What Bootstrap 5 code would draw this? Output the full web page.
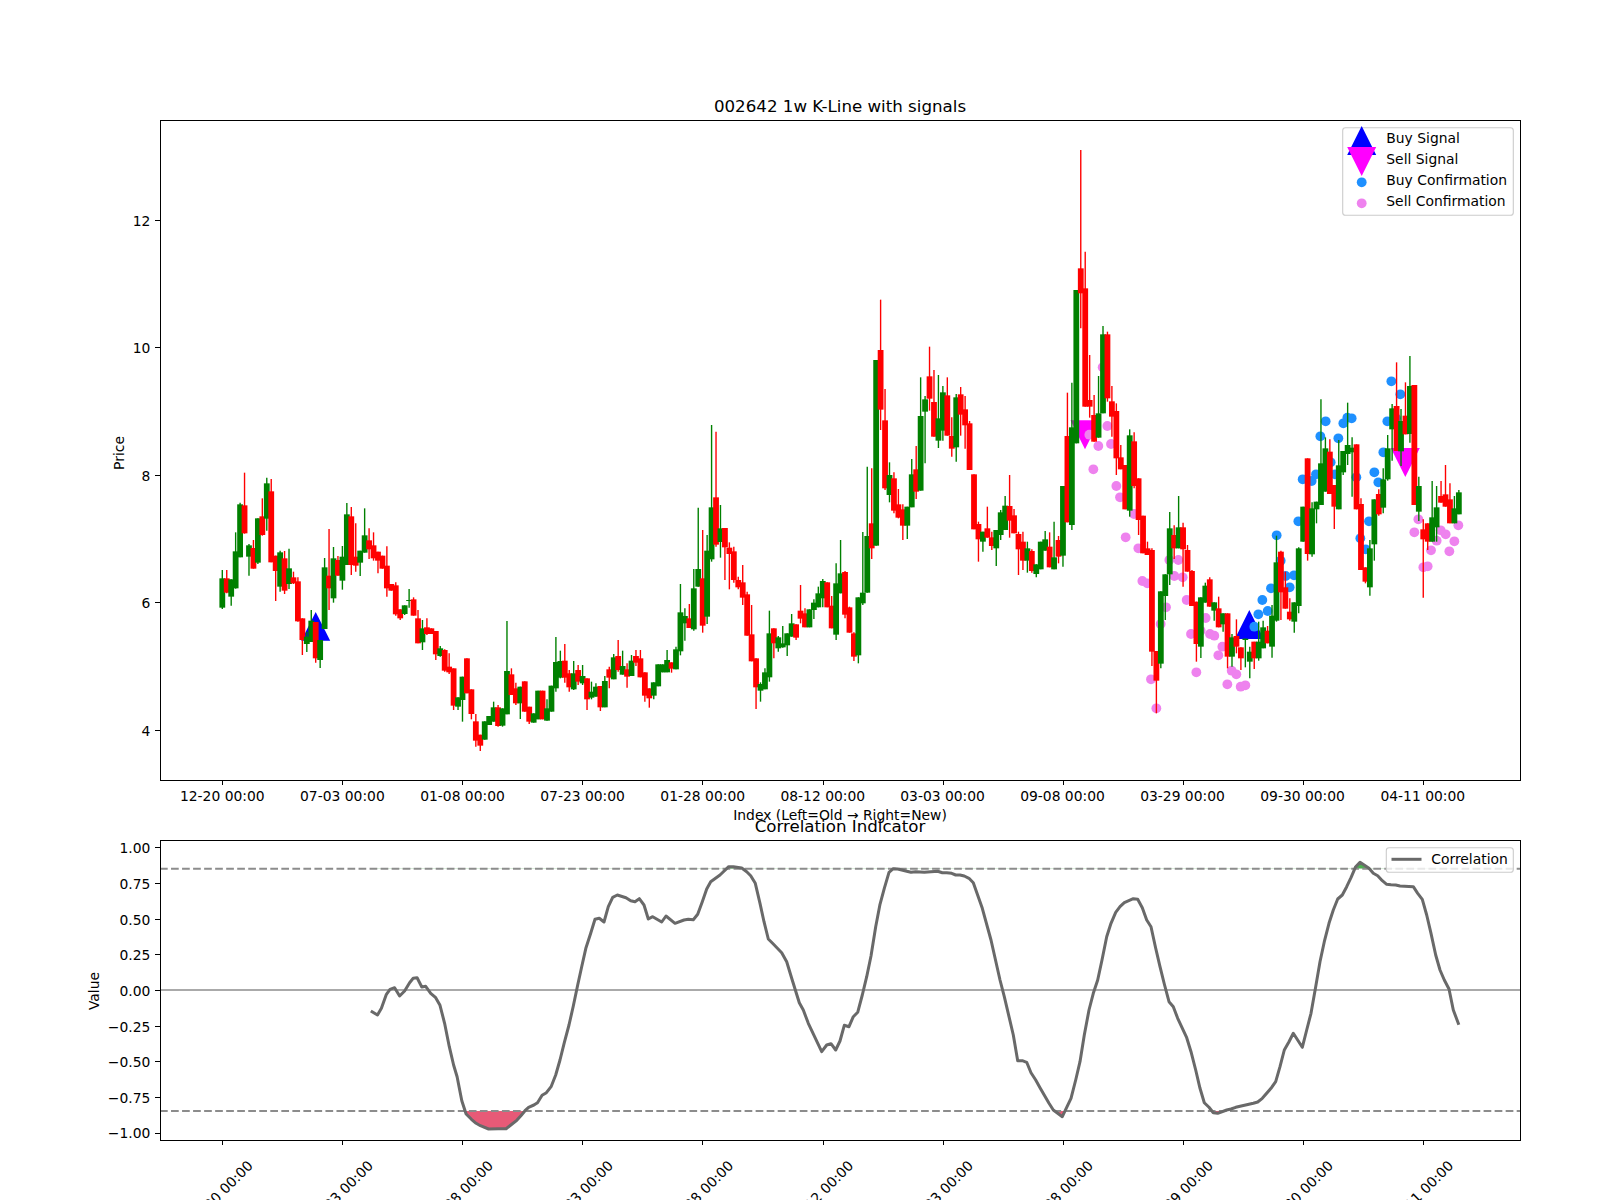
<!DOCTYPE html>
<html lang="en">

<head>
    <meta charset="UTF-8" />
    <meta name="viewport" content="width=device-width, initial-scale=1.0" />
    <title>002642 1w K-Line with signals</title>
    <link href="https://cdn.jsdelivr.net/npm/bootstrap@5.3.0/dist/css/bootstrap.min.css" rel="stylesheet" />
    <style>
        html, body {
            background-color: #fff;
            overflow: hidden;
        }

        .plot-figure {
            display: block;
            width: 1600px;
            height: 1200px;
        }

        .plot-figure text {
            font-family: "DejaVu Sans", sans-serif;
            font-size: 13.89px;
            fill: #000;
        }

        .plot-figure text.plot-title {
            font-size: 16.67px;
            text-anchor: middle;
        }

        .plot-figure .tick-y text {
            text-anchor: end;
        }

        .plot-figure .tick-x text,
        .plot-figure text.axis-label {
            text-anchor: middle;
        }

        .axes-frame {
            fill: none;
            stroke: #000;
            stroke-width: 1;
            shape-rendering: crispEdges;
        }

        .legend-frame {
            fill: #fff;
            fill-opacity: .8;
            stroke: #ccc;
            stroke-width: 1.11;
        }

        .tick-mark {
            stroke: #000;
            stroke-width: 1;
            shape-rendering: crispEdges;
        }

        .level-dash {
            stroke: #8c8c8c;
            stroke-width: 2.08;
            stroke-dasharray: 7.7 3.33;
        }

        .level-zero {
            stroke: #aaa;
            stroke-width: 2.08;
        }

        .corr-line {
            fill: none;
            stroke: #696969;
            stroke-width: 3;
            stroke-linejoin: round;
            stroke-linecap: square;
        }

        .fill-low {
            fill: #e75a77;
        }

        .fill-high {
            fill: #4caf50;
        }
    </style>
</head>

<body>
    <main class="d-flex">
        <svg class="plot-figure" viewBox="0 0 1600 1200" xmlns="http://www.w3.org/2000/svg">
            <defs>
                <clipPath id="clipLow"><rect x="160" y="1111" width="1360" height="29" /></clipPath>
                <clipPath id="clipHigh"><rect x="160" y="840" width="1360" height="28.8" /></clipPath>
            </defs>

            <!-- K-line panel -->
            <g id="signals"></g>
            <g id="candles"></g>
            <rect class="axes-frame" x="160.5" y="120.5" width="1360" height="660" />
            <text class="plot-title" x="840" y="111.5">002642 1w K-Line with signals</text>
            <g id="ticksTop"></g>
            <g class="tick-y">
                <text x="150.3" y="225.5">12</text>
                <text x="150.3" y="353">10</text>
                <text x="150.3" y="480.5">8</text>
                <text x="150.3" y="608">6</text>
                <text x="150.3" y="735.5">4</text>
            </g>
            <g class="tick-x">
                <text x="222.3" y="801">12-20 00:00</text>
                <text x="342.4" y="801">07-03 00:00</text>
                <text x="462.5" y="801">01-08 00:00</text>
                <text x="582.6" y="801">07-23 00:00</text>
                <text x="702.7" y="801">01-28 00:00</text>
                <text x="822.8" y="801">08-12 00:00</text>
                <text x="942.6" y="801">03-03 00:00</text>
                <text x="1062.5" y="801">09-08 00:00</text>
                <text x="1182.5" y="801">03-29 00:00</text>
                <text x="1302.6" y="801">09-30 00:00</text>
                <text x="1422.8" y="801">04-11 00:00</text>
            </g>
            <text class="axis-label" x="840" y="820">Index (Left=Old → Right=New)</text>
            <text class="axis-label" transform="translate(124 453) rotate(-90)">Price</text>

            <!-- legend of the K-line panel -->
            <rect class="legend-frame" x="1342.7" y="127.7" width="170.6" height="87.6" rx="2.8" />
            <polygon points="1361.7,126 1376.2,155 1347.2,155" fill="#0000ff" />
            <polygon points="1361.7,176 1376.2,147 1347.2,147" fill="#ff00ff" />
            <circle cx="1361.7" cy="182.3" r="4.9" fill="#1e90ff" />
            <circle cx="1361.7" cy="203.3" r="4.9" fill="#ee82ee" />
            <text x="1386.3" y="143.3">Buy Signal</text>
            <text x="1386.3" y="164.3">Sell Signal</text>
            <text x="1386.3" y="185.3">Buy Confirmation</text>
            <text x="1386.3" y="206">Sell Confirmation</text>

            <!-- correlation panel -->
            <path id="corrFillLow" class="fill-low" clip-path="url(#clipLow)" />
            <path id="corrFillHigh" class="fill-high" clip-path="url(#clipHigh)" />
            <line class="level-dash" x1="160" y1="868.8" x2="1520" y2="868.8" />
            <line class="level-dash" x1="160" y1="1111" x2="1520" y2="1111" />
            <line class="level-zero" x1="160" y1="990" x2="1520" y2="990" />
            <polyline id="corrLine" class="corr-line" />
            <rect class="axes-frame" x="160.5" y="840.5" width="1360" height="300" />
            <text class="plot-title" x="840" y="831.5">Correlation Indicator</text>
            <g id="ticksBottom"></g>
            <g class="tick-y">
                <text x="150.3" y="853">1.00</text>
                <text x="150.3" y="889">0.75</text>
                <text x="150.3" y="924.5">0.50</text>
                <text x="150.3" y="960">0.25</text>
                <text x="150.3" y="995.5">0.00</text>
                <text x="150.3" y="1031.5">−0.25</text>
                <text x="150.3" y="1067">−0.50</text>
                <text x="150.3" y="1102.5">−0.75</text>
                <text x="150.3" y="1138">−1.00</text>
            </g>
            <g class="tick-x">
                <text transform="translate(220.3 1193) rotate(-45)" y="5">12-20 00:00</text>
                <text transform="translate(340.4 1193) rotate(-45)" y="5">07-03 00:00</text>
                <text transform="translate(460.5 1193) rotate(-45)" y="5">01-08 00:00</text>
                <text transform="translate(580.6 1193) rotate(-45)" y="5">07-23 00:00</text>
                <text transform="translate(700.7 1193) rotate(-45)" y="5">01-28 00:00</text>
                <text transform="translate(820.8 1193) rotate(-45)" y="5">08-12 00:00</text>
                <text transform="translate(940.6 1193) rotate(-45)" y="5">03-03 00:00</text>
                <text transform="translate(1060.5 1193) rotate(-45)" y="5">09-08 00:00</text>
                <text transform="translate(1180.5 1193) rotate(-45)" y="5">03-29 00:00</text>
                <text transform="translate(1300.6 1193) rotate(-45)" y="5">09-30 00:00</text>
                <text transform="translate(1420.8 1193) rotate(-45)" y="5">04-11 00:00</text>
            </g>
            <text class="axis-label" transform="translate(99 991) rotate(-90)">Value</text>

            <!-- legend of the correlation panel -->
            <rect class="legend-frame" x="1386.3" y="847.7" width="127" height="24.6" rx="2.8" />
            <line x1="1391.5" y1="859.3" x2="1421.5" y2="859.3" stroke="#696969" stroke-width="3" />
            <text x="1431.3" y="864">Correlation</text>
        </svg>
    </main>

    <script src="https://cdn.jsdelivr.net/npm/bootstrap@5.3.0/dist/js/bootstrap.bundle.min.js"></script>
    <script>
        const SVGNS = 'http://www.w3.org/2000/svg';
        const barX = i => 222.3 + 4.448 * i;

        function add(parent, tag, attrs) {
            const el = document.createElementNS(SVGNS, tag);
            for (const k in attrs) el.setAttribute(k, attrs[k]);
            parent.appendChild(el);
            return el;
        }

        // colour, body top, body bottom, wick top, wick bottom; y values are read off
        // 3x crops, so every block has the page y of its crop as offset
        const blocks = [
            [440, `g 415 503 390 507;r 415 458 390 460;g 418 470 418 497;g 334 445 277 446;g 193 352 188 352;r 196 280 98 281;g 316 350 312 407;r 324 386 300 386;g 235 368 235 372;r 229 285 175 287;
                g 130 236 113 272;r 154 367 117 367;r 347 393 347 483;g 337 440 332 455;r 355 452 333 462;g 385 432 326 447;r 412 430 395 432;r 424 544 412 545;r 535 600 535 645;g 590 612 575 636;
                g 542 606 510 606;r 546 655 546 668;g 600 660 600 684;g 382 567 354 567;r 407 445 267 510;g 355 475 321 488;r 360 407 348 407;g 350 422 318 449;g 223 375 189 375;r 229 375 201 405;
                r 350 377 250 395;g 332 368 332 408;g 286 338 205 338;r 301 328 265 357;r 316 355 277 362;r 335 362 335 400;r 347 386 347 386;r 377 445 319 470;r 432 452 432 452;r 436 523 427 527;
                r 508 535 508 540;g 496 522 496 525;g 480 482 447 503;r 478 527 472 527;r 535 610 510 610;g 565 607 540 630;r 562 582 535 585;r 565 582 565 582;r 573 643 573 660;g 625 648 618 650;
                r 630 692 628 695;r 680 697 640 702;r 685 797 685 810;g 772 800 772 810;g 710 780 710 845;r 655 760 655 760;r 748 822 748 838;r 844 902 822 920;r 884 917 884 933;g 844 899 844 899;
                g 828 855 828 855;g 802 845 785 845;r 802 858 795 860;g 805 857 805 860;g 693 823 543 823;r 703 765 685 765;r 745 790 728 795;g 740 790 740 837;r 724 815 724 815;r 800 845 800 852;
                g 820 848 820 848;g 752 838 752 838;r 752 838 752 838;g 805 842 778 842;g 737 815 737 815;g 666 745 591 755`],
            [380, `g 843 893 812 895;r 842 893 792 908;r 880 922 870 935;g 880 928 843 930;r 870 905 855 915;g 888 910 855 915;r 895 958 895 990;g 935 953 905 958;g 920 950 910 950;r 918 982 918 993;
                g 903 982 888 982;r 868 893 860 925;g 832 898 822 898;r 828 870 780 875;g 858 884 812 884;r 868 890 850 923;g 842 888 825 888;r 828 848 810 858;r 835 892 810 892;r 877 947 877 965;
                r 925 955 925 983;g 907 947 907 958;g 853 919 853 919;g 853 877 853 877;g 840 877 810 877;r 847 866 847 878;g 808 868 800 868;g 697 814 612 826;g 708 730 685 782;r 715 744 672 744;
                g 625 748 567 752;g 567 620 383 620;r 595 737 450 758;g 512 710 465 732;g 382 538 135 545;r 352 494 155 500;g 445 486 375 533;r 444 502 444 600;r 503 522 487 628;r 514 600 500 608;
                r 600 622 590 628;r 607 653 555 675;r 643 767 635 767;r 763 844 675 844;r 835 922 835 987;g 912 932 907 965;g 877 928 865 928;g 760 892 692 905;r 745 790 745 835;g 772 805 768 815;
                g 790 802 738 803;g 760 796 760 828;g 730 770 702 770;r 733 773 733 780;r 692 716 615 730;r 700 742 685 742;g 688 742 688 742;g 668 690 658 717;g 640 682 620 682;g 603 655 597 682;
                r 607 682 607 682;r 677 745 648 745;g 610 764 550 780;g 580 640 480 640;r 576 704 573 715;r 682 758 680 758;r 760 830 757 843;g 652 826 652 850;g 638 670 456 675;g 468 638 260 638;
                r 430 505 265 537`],
            [290, `g 210 767 210 767;r 180 359 29 420;r 391 595 297 600`],
            [380, `g 285 345 247 367;r 295 392 277 400;r 373 413 327 415;r 388 437 373 480;g 380 437 380 477;g 283 382 237 382;r 268 335 198 357`],
            [290, `g 378 602 262 602;g 328 365 318 520;r 259 326 170 362;r 336 440 240 440;g 385 452 255 474;g 307 422 288 452;r 316 437 262 437;r 438 476 382 500;g 322 472 312 515;r 313 374 291 437;
                r 358 406 318 476;r 400 540 393 540`],
            [440, `r 103 268 103 268;r 252 298 245 365;g 275 305 275 335;r 265 293 200 293;r 292 318 275 330;g 270 325 270 378;g 217 285 210 300;g 197 270 168 270;r 198 242 105 293;r 226 280 207 280;
                r 282 328 275 405;r 305 362 275 390;g 325 362 305 398;r 333 393 328 398;g 373 402 373 412`],
            [420, `g 365 448 365 448;g 358 392 333 392;r 380 442 337 442;g 412 448 305 448;r 360 410 348 430;g 198 407 198 440`],
            [140, `r 888 1147 758 1147;g 862 1155 728 1170;g 450 910 450 910;r 385 460 30 565;r 445 800 335 800;r 780 800 645 833;r 825 905 765 905;g 820 893 708 893;g 583 820 558 820;r 583 775 575 785;
                r 784 830 738 890;r 813 955 790 1005`],
            [420, `r 112 148 75 148;r 135 268 135 268;g 46 272 28 290;r 64 198 37 205;r 175 300 175 345;r 287 400 287 400;r 385 405 365 405;r 390 695 385 738;r 693 782 693 880;g 514 731 514 745;
                g 463 528 463 600;g 325 463 276 495;r 345 385 316 417;g 322 385 228 385;r 322 388 308 500;r 390 455 375 455;r 453 558 450 558;r 545 672 545 725;g 532 680 532 714;g 497 548 488 548;
                r 478 560 472 560;g 547 572 547 602;r 565 622 530 622`],
            [350, `g 790 823 790 845;r 790 920 790 955;g 862 920 852 950;r 858 890 808 910;r 892 925 892 960;g 866 870 866 952;g 905 935 890 985;r 875 925 875 957;g 875 925 815 932;g 832 895 812 895;
                r 842 880 828 880;g 797 890 765 923;g 637 812 557 815;r 605 727 602 810;r 712 776 665 776;r 785 808 745 812;g 757 815 757 848;g 595 768 592 790;g 470 575 470 575;r 325 612 325 632;
                g 475 613 457 620;g 455 478 455 520;g 340 465 148 465;g 295 425 262 425;r 305 432 268 432;r 405 470 405 537;g 346 478 270 478;g 303 367 303 375;g 285 312 158 345;g 293 307 262 440;
                r 283 478 283 478;r 462 660 445 660;r 652 695 652 700;g 595 712 570 737;g 448 583 448 632;r 432 493 418 497;g 388 473 355 490;g 295 388 255 392;g 175 238 162 332;r 168 303 37 303;
                g 213 304 177 348;r 197 253 97 253;g 108 252 18 278;r 105 465 105 465;g 408 485 380 513;r 538 568 508 743;r 520 575 520 600;g 502 575 393 575;g 472 532 408 575;r 438 458 393 458;
                r 433 470 345 470;r 448 520 400 520;g 475 520 438 520;g 427 493 420 493`]
        ];

        const candles = document.getElementById('candles');
        let idx = 0;
        blocks.forEach(([off, rows]) => {
            rows.split(';').forEach(row => {
                const [c, top, bot, wt, wb] = row.trim().split(' ');
                const color = c === 'g' ? '#008000' : '#ff0000';
                const x = barX(idx);
                add(candles, 'line', { x1: x, x2: x, y1: off + wt / 3, y2: off + wb / 3, stroke: color, 'stroke-width': 1.39 });
                add(candles, 'rect', { x: x - 2.9, width: 5.8, y: off + top / 3, height: Math.max((bot - top) / 3, 1), fill: color });
                idx++;
            });
        });

        // confirmation dots and signal triangles lie under the candles
        const signals = document.getElementById('signals');
        const blueDots = [[103, 830], [115, 793], [127, 750], [143, 783], [153, 715], [182, 632], [197, 678], [209, 712], [222, 676], [170, 556], [235, 514], [248, 388], [275, 393], [288, 373], [301, 259], [317, 214], [332, 337], [345, 373], [355, 265], [370, 220], [382, 203], [395, 205], [409, 382], [421, 565], [437, 598], [447, 514], [463, 367], [475, 397], [490, 307], [502, 214], [514, 94], [541, 133], [528, 205]];
        const violetRight = [[595, 508], [583, 547], [650, 572], [633, 601], [662, 541], [677, 553], [703, 574], [715, 526], [688, 604], [610, 652], [623, 649], [62, 1010], [76, 1006], [35, 962], [49, 973], [22, 1003]];
        const violetMid = [[148, 44], [175, 78], [160, 148], [202, 18], [213, 72], [229, 198], [240, 232], [282, 282], [257, 352], [295, 385], [307, 483], [322, 490], [378, 562], [362, 612], [333, 778], [349, 865], [388, 420], [415, 420], [403, 468], [428, 472], [440, 540], [497, 594], [453, 642], [482, 632], [510, 642], [523, 647], [469, 757], [535, 706], [547, 680], [188, -158]];

        add(signals, 'polygon', { points: '315.7,612 330.2,640.7 301.2,640.7', fill: '#0000ff' });
        add(signals, 'polygon', { points: '1249.3,610 1263.8,639 1234.8,639', fill: '#0000ff' });
        add(signals, 'polygon', { points: '1085,449.3 1099.5,420.3 1070.5,420.3', fill: '#ff00ff' });
        add(signals, 'polygon', { points: '1405.3,477 1419.8,448 1390.8,448', fill: '#ff00ff' });
        blueDots.forEach(([x, y]) => add(signals, 'circle', { cx: 1220 + x / 3, cy: 350 + y / 3, r: 4.9, fill: '#1e90ff' }));
        violetRight.forEach(([x, y]) => add(signals, 'circle', { cx: 1220 + x / 3, cy: 350 + y / 3, r: 4.9, fill: '#ee82ee' }));
        violetMid.forEach(([x, y]) => add(signals, 'circle', { cx: 1040 + x / 3, cy: 420 + y / 3, r: 4.9, fill: '#ee82ee' }));

        // tick marks
        const ticksTop = document.getElementById('ticksTop');
        const ticksBottom = document.getElementById('ticksBottom');
        for (let k = 0; k <= 10; k++) {
            const x = 222.5 + 120.1 * k;
            add(ticksTop, 'line', { class: 'tick-mark', x1: x, x2: x, y1: 781, y2: 785.4 });
            add(ticksBottom, 'line', { class: 'tick-mark', x1: x, x2: x, y1: 1141, y2: 1145.4 });
        }
        [220.5, 347.5, 475.5, 602.5, 730.5].forEach(y => add(ticksTop, 'line', { class: 'tick-mark', x1: 155.1, x2: 160, y1: y, y2: y }));
        for (let k = -4; k <= 4; k++) {
            const y = Math.round(990 - 35.65 * k) + 0.5;
            add(ticksBottom, 'line', { class: 'tick-mark', x1: 155.1, x2: 160, y1: y, y2: y });
        }

        // correlation curve, three crops with their own scale
        const corrA = [[1042, 755], [1057, 765], [1068, 745], [1082, 703], [1092, 688], [1105, 683], [1119, 708], [1133, 693], [1147, 668], [1157, 655], [1168, 653], [1181, 681], [1192, 679], [1206, 700], [1220, 713], [1232, 736], [1245, 790], [1258, 860], [1270, 915], [1280, 950], [1293, 1022], [1305, 1062], [1320, 1078], [1333, 1090], [1345, 1097], [1368, 1107], [1395, 1106], [1417, 1106], [1433, 1093], [1447, 1081], [1458, 1068], [1470, 1052], [1480, 1042], [1495, 1035], [1505, 1028], [1518, 1006], [1530, 998], [1543, 980], [1556, 945]];
        const corrB = [[0, 900], [13, 848], [27, 795], [40, 738], [53, 675], [65, 620], [78, 563], [92, 520], [105, 478], [118, 475], [132, 486], [145, 440], [158, 412], [172, 405], [198, 413], [212, 422], [225, 425], [238, 416], [252, 435], [265, 477], [278, 470], [305, 486], [318, 468], [345, 490], [372, 480], [385, 478], [400, 479], [413, 463], [427, 425], [440, 387], [452, 365], [480, 345], [506, 320], [520, 320], [545, 324], [560, 335], [572, 347], [586, 370], [600, 430], [612, 485], [625, 537], [640, 552], [665, 578], [680, 605], [695, 655], [718, 728], [730, 750], [745, 790], [785, 875], [800, 855], [813, 851], [827, 870], [840, 843], [853, 796], [867, 800], [880, 770], [893, 757], [907, 705], [920, 650], [933, 588], [947, 500], [960, 433], [973, 385], [987, 337], [1000, 326], [1013, 327], [1040, 334], [1053, 337], [1067, 335], [1093, 337], [1133, 334], [1147, 338], [1160, 338], [1175, 340], [1187, 345], [1200, 345], [1213, 348], [1227, 355], [1240, 368], [1267, 445], [1293, 540], [1320, 660], [1333, 710], [1347, 770], [1360, 825], [1373, 902], [1387, 902], [1400, 907], [1413, 938], [1427, 960], [1440, 983], [1467, 1030], [1480, 1050], [1507, 1070], [1520, 1042], [1533, 1015], [1547, 960]];
        const corrC = [[0, 905], [13, 825], [27, 750], [40, 700], [53, 660], [66, 600], [80, 530], [93, 490], [107, 457], [120, 440], [133, 428], [160, 416], [173, 418], [187, 443], [200, 480], [213, 500], [227, 565], [240, 620], [253, 672], [267, 725], [280, 740], [293, 775], [320, 833], [333, 875], [347, 930], [360, 985], [373, 1028], [387, 1042], [400, 1058], [413, 1060], [440, 1050], [453, 1047], [467, 1042], [520, 1030], [533, 1026], [547, 1015], [573, 985], [587, 965], [600, 920], [613, 870], [627, 845], [640, 820], [667, 862], [680, 810], [693, 760], [707, 680], [720, 605], [733, 545], [747, 490], [760, 450], [773, 417], [787, 405], [800, 380], [813, 353], [827, 320], [840, 307], [867, 325], [880, 340], [893, 347], [907, 362], [920, 373], [933, 374], [947, 375], [960, 378], [1000, 380], [1013, 400], [1027, 418], [1040, 465], [1053, 520], [1067, 585], [1080, 630], [1093, 660], [1107, 687], [1120, 750], [1135, 790]];

        const corr = [
            ...corrA.map(([x, y]) => [x / 2.8, 760 + y / 3]),
            ...corrB.map(([x, y]) => [560 + x / 3, 760 + y / 3]),
            ...corrC.map(([x, y]) => [1080 + x / 3, 760 + y / 3])
        ].map(p => p[0].toFixed(1) + ',' + p[1].toFixed(1));

        document.getElementById('corrLine').setAttribute('points', corr.join(' '));
        document.getElementById('corrFillLow').setAttribute('d', 'M' + corr.join('L') + 'V1111H372Z');
        document.getElementById('corrFillHigh').setAttribute('d', 'M' + corr.join('L') + 'V868.8H372Z');
    </script>
</body>

</html>
